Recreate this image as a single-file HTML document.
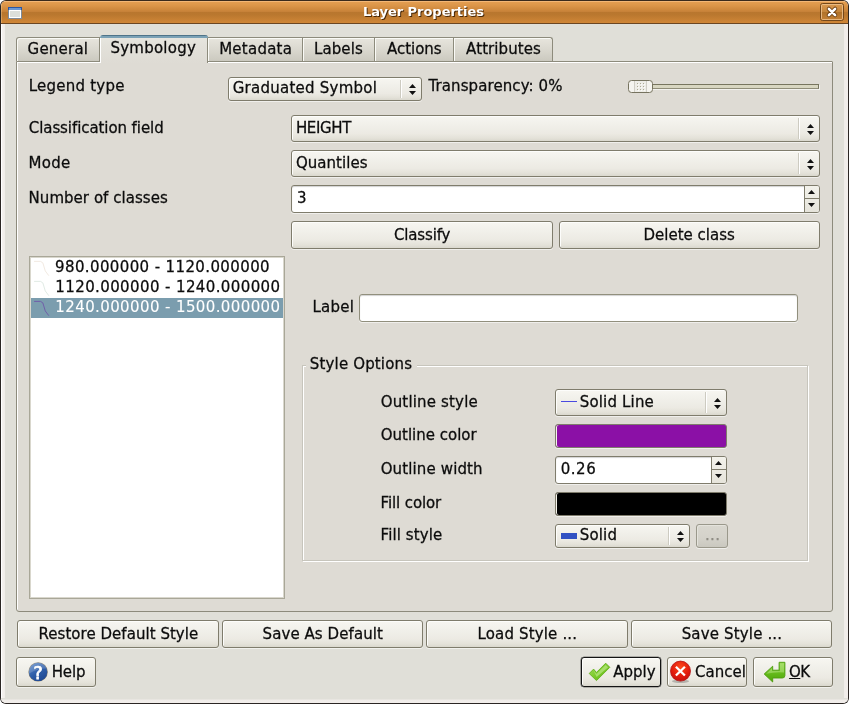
<!DOCTYPE html>
<html>
<head>
<meta charset="utf-8">
<title>Layer Properties</title>
<style>
html,body{margin:0;padding:0;background:#fff;}
body{width:849px;height:704px;overflow:hidden;position:relative;font-family:"DejaVu Sans","Liberation Sans",sans-serif;font-size:15px;color:#0c0c0c;}
#win{position:absolute;left:0;top:0;width:847px;height:702px;border:1px solid #2b2624;border-top-color:#3a2a1c;border-radius:6px 6px 6px 6px;background:#e0dfd8;overflow:hidden;will-change:transform;}
#win *{box-sizing:border-box;}
.abs{position:absolute;}
#title{position:absolute;left:0;top:0;width:847px;height:23px;background:linear-gradient(to bottom,#f3b776 0,#f3b776 1px,#e39d50 1px,#dd974a 4px,#cd873c 9px,#c58038 11px,#b8762e 11px,#ba782f 14px,#c88134 19px,#d08636 22px);border-bottom:1px solid #6b4622;box-shadow:inset 1px 0 0 rgba(255,220,170,.35);}
#title .txt{position:absolute;top:2px;white-space:nowrap;font-weight:bold;font-size:13px;color:#fff;text-shadow:1px 1px 0 rgba(50,25,0,.85);line-height:18px;}
.bevL{position:absolute;left:0;top:23px;width:5px;height:680px;background:linear-gradient(to right,#fff 0,#fff 1px,#f4f1ee 1.4px,#f1eeea 3.6px,#e0dfd8 4.4px);}
.bevR{position:absolute;left:842px;top:23px;width:5px;height:680px;background:linear-gradient(to left,#f2eeeb 0,#f0ece9 3.6px,#e0dfd8 4.4px);}
.bevB{position:absolute;left:0;top:697px;width:847px;height:5px;background:linear-gradient(to top,#f2eeeb 0,#f0ece9 3.1px,#e0dfd8 3.9px);}
#pane{position:absolute;left:15px;top:60px;width:817px;height:551px;border:1px solid #8d8b7c;border-radius:0 1px 3px 3px;background:#dedbd4;box-shadow:inset 1px 1px 0 #fff;}
.tab{position:absolute;top:36px;height:24px;border-top:1px solid #8d8b7c;border-right:1px solid #8d8b7c;background:linear-gradient(to bottom,#e7e5dd 0,#dad8cf 50%,#cbc9bf 100%);box-shadow:inset 1px 1px 0 #fafaf6;white-space:nowrap;}
.tab.first{border-left:1px solid #8d8b7c;border-top-left-radius:3px;}
.tab.last{border-top-right-radius:3px;}
.tab.sel{top:34px;height:28px;border:none;border-right:1px solid #8d8b7c;border-left:1px solid #fff;background:linear-gradient(to bottom,#e8e7e0 0,#e3e1da 40%,#dedbd4 100%);box-shadow:none;border-radius:3px 3px 0 0;}
.tab.sel:before{content:"";position:absolute;left:-1px;right:-1px;top:0;height:3px;background:linear-gradient(to bottom,#4f7489 0,#4f7489 1px,#7ba2b6 1px,#7ba2b6 3px);border-radius:3px 3px 0 0;}
.tx{position:absolute;white-space:nowrap;line-height:18px;height:18px;-webkit-text-stroke:0.27px currentColor;}
.btn,.combo{position:absolute;border:1px solid #7f7c6c;border-radius:3px;background:linear-gradient(to bottom,#f7f6f1 0,#f1f0ea 35%,#eceae3 70%,#e4e2d9 88%,#dad8ce 100%);box-shadow:inset 1px 1px 0 #fdfdfb,0 1px 0 rgba(255,255,255,.55);}
.combo .sep{position:absolute;right:19px;top:2px;bottom:2px;width:2px;background:linear-gradient(to right,#cdcbc1 0,#cdcbc1 1px,#fff 1px,#fff 2px);}
.combo svg.ar{position:absolute;right:5px;}
.btn.dis{border-color:#9a988b;background:linear-gradient(to bottom,#d9d7cf 0,#d4d2ca 60%,#cac8bf 100%);box-shadow:inset 1px 1px 0 #e4e3dc,0 1px 0 rgba(255,255,255,.55);}
.btn.def{border-color:#141414;box-shadow:inset 1px 1px 0 #fdfdfb,0 0 0 0.3px #141414;}
.edit{border-color:#918f7d !important;}
.edit,.spin{position:absolute;border:1px solid #7f7c6c;border-radius:3px;background:#fff;box-shadow:inset 0 1px 1px rgba(0,0,0,.18),0 1px 0 rgba(255,255,255,.55);}
.spin .bt{position:absolute;right:0;top:0;bottom:0;width:15px;border-left:1px solid #7f7c6c;background:linear-gradient(to bottom,#f3f2eb 0,#e6e4db 100%);border-radius:0 2px 2px 0;}
.spin .bt .mid{position:absolute;left:0;right:0;top:50%;margin-top:-1px;height:1px;background:#7f7c6c;}
.spin .bt svg{position:absolute;left:3px;}
</style>
</head>
<body>
<div id="win">
 <div id="title"><div class="txt" style="left:361.88px;letter-spacing:-0.03px;">Layer Properties</div></div>
 <div class="bevL"></div><div class="bevR"></div><div class="bevB"></div>
 <div id="pane"></div>
 <div class="tab first" style="left:15px;width:84px;"></div>
 <div class="tab " style="left:207px;width:95px;"></div>
 <div class="tab " style="left:302px;width:72px;"></div>
 <div class="tab " style="left:374px;width:79px;"></div>
 <div class="tab last" style="left:453px;width:99px;"></div>
 <div class="tab sel" style="left:99px;width:108px;"></div>
 <div class="tx " style="left:26.6px;top:39px;letter-spacing:0.21px;">General</div>
 <div class="tx " style="left:109.46px;top:38px;letter-spacing:0.24px;">Symbology</div>
 <div class="tx " style="left:218.19px;top:39px;letter-spacing:0.24px;">Metadata</div>
 <div class="tx " style="left:313.09px;top:39px;letter-spacing:0.07px;">Labels</div>
 <div class="tx " style="left:386.0px;top:39px;letter-spacing:-0.02px;">Actions</div>
 <div class="tx " style="left:465.1px;top:39px;letter-spacing:0.08px;">Attributes</div>
 <div class="tx " style="left:27.79px;top:76px;letter-spacing:0.23px;">Legend type</div>
 <div class="combo" style="left:227px;top:76px;width:194px;height:24px;"><div class="sep"></div><svg class="ar" style="top:6px" width="7" height="11" viewBox="0 0 7 11"><path d="M3.5 0 L7 4 L0 4 Z M0 7 L7 7 L3.5 11 Z" fill="#111"/></svg></div>
 <div class="tx " style="left:231.7px;top:78px;letter-spacing:0.25px;">Graduated Symbol</div>
 <div class="tx " style="left:427.53px;top:76px;letter-spacing:0.09px;">Transparency: 0%</div>
 <div class="abs" style="left:636px;top:83px;width:182px;height:5px;border:1px solid #77755f;border-bottom-color:#8f8d78;background:#d8d6c1;box-shadow:1px 1px 0 rgba(255,255,255,.6);"></div>
 <svg class="abs" style="left:627px;top:79px;" width="25" height="13" viewBox="0 0 25 13"><rect x="0.5" y="0.5" width="24" height="12" rx="3" fill="#f5f4ef" stroke="#76735f"/><rect x="7" y="1" width="11" height="11" fill="#eeede7"/><rect x="6" y="1" width="1" height="11" fill="#d0cec5"/><rect x="18" y="1" width="1" height="11" fill="#d0cec5"/><rect x="9" y="3" width="1" height="1" fill="#aeac96"/><rect x="10" y="4" width="1" height="1" fill="#fff" fill-opacity=".8"/><rect x="9" y="6" width="1" height="1" fill="#aeac96"/><rect x="10" y="7" width="1" height="1" fill="#fff" fill-opacity=".8"/><rect x="9" y="9" width="1" height="1" fill="#aeac96"/><rect x="10" y="10" width="1" height="1" fill="#fff" fill-opacity=".8"/><rect x="12" y="3" width="1" height="1" fill="#aeac96"/><rect x="13" y="4" width="1" height="1" fill="#fff" fill-opacity=".8"/><rect x="12" y="6" width="1" height="1" fill="#aeac96"/><rect x="13" y="7" width="1" height="1" fill="#fff" fill-opacity=".8"/><rect x="12" y="9" width="1" height="1" fill="#aeac96"/><rect x="13" y="10" width="1" height="1" fill="#fff" fill-opacity=".8"/><rect x="15" y="3" width="1" height="1" fill="#aeac96"/><rect x="16" y="4" width="1" height="1" fill="#fff" fill-opacity=".8"/><rect x="15" y="6" width="1" height="1" fill="#aeac96"/><rect x="16" y="7" width="1" height="1" fill="#fff" fill-opacity=".8"/><rect x="15" y="9" width="1" height="1" fill="#aeac96"/><rect x="16" y="10" width="1" height="1" fill="#fff" fill-opacity=".8"/></svg>
 <div class="tx " style="left:27.8px;top:118px;letter-spacing:-0.08px;">Classification field</div>
 <div class="combo" style="left:290px;top:114px;width:529px;height:27px;"><div class="sep"></div><svg class="ar" style="top:8px" width="7" height="11" viewBox="0 0 7 11"><path d="M3.5 0 L7 4 L0 4 Z M0 7 L7 7 L3.5 11 Z" fill="#111"/></svg></div>
 <div class="tx " style="left:294.89px;top:118px;letter-spacing:-0.35px;">HEIGHT</div>
 <div class="tx " style="left:27.59px;top:153px;letter-spacing:0.28px;">Mode</div>
 <div class="combo" style="left:290px;top:149px;width:529px;height:27px;"><div class="sep"></div><svg class="ar" style="top:8px" width="7" height="11" viewBox="0 0 7 11"><path d="M3.5 0 L7 4 L0 4 Z M0 7 L7 7 L3.5 11 Z" fill="#111"/></svg></div>
 <div class="tx " style="left:294.9px;top:153px;letter-spacing:0.05px;">Quantiles</div>
 <div class="tx " style="left:27.59px;top:188px;letter-spacing:0.04px;">Number of classes</div>
 <div class="spin" style="left:290px;top:184px;width:529px;height:28px;"><div class="bt"><div class="mid"></div><svg width="7" height="4" viewBox="0 0 7 4" style="top:4px"><path d="M3.5 0 L7 4 L0 4 Z" fill="#111"/></svg><svg width="7" height="4" viewBox="0 0 7 4" style="top:17px"><path d="M0 0 L7 0 L3.5 4 Z" fill="#111"/></svg></div></div>
 <div class="tx " style="left:296.06px;top:188px;">3</div>
 <div class="btn" style="left:290px;top:220px;width:262px;height:28px;"></div>
 <div class="tx " style="left:392.9px;top:225px;letter-spacing:-0.14px;">Classify</div>
 <div class="btn" style="left:558px;top:220px;width:261px;height:28px;"></div>
 <div class="tx " style="left:642.39px;top:225px;letter-spacing:0.02px;">Delete class</div>
 <div class="abs" id="list" style="left:28px;top:255px;width:256px;height:343px;border:1px solid #a9a798;background:#fff;box-shadow:inset 0 0 0 1px #d9d7cd;"></div>
 <div class="abs" style="left:30px;top:297px;width:252px;height:20px;background:#7b9dae;"></div>
 <div class="tx " style="left:54.06px;top:257px;letter-spacing:0.38px;">980.000000 - 1120.000000</div>
 <div class="tx " style="left:54.36px;top:277px;letter-spacing:0.39px;">1120.000000 - 1240.000000</div>
 <div class="tx " style="left:54.36px;top:297px;letter-spacing:0.39px;color:#fff;-webkit-text-stroke-width:0.1px;">1240.000000 - 1500.000000</div>
 <div class="tx " style="left:311.39px;top:297px;letter-spacing:0.25px;">Label</div>
 <div class="edit" style="left:358px;top:293px;width:439px;height:28px;"></div>
 <div class="abs" style="left:302px;top:365px;width:506px;height:196px;border:1px solid #fff;"></div>
 <div class="abs" style="left:301px;top:364px;width:506px;height:196px;border:1px solid #c7c5bc;"></div>
 <div class="tx " style="left:304.86px;top:354px;letter-spacing:0.15px;background:#dedbd4;padding:0 5px 0 4px;">Style Options</div>
 <div class="tx " style="left:379.7px;top:392px;letter-spacing:0.17px;">Outline style</div>
 <div class="combo" style="left:554px;top:388px;width:172px;height:27px;"><div class="sep"></div><svg class="ar" style="top:8px" width="7" height="11" viewBox="0 0 7 11"><path d="M3.5 0 L7 4 L0 4 Z M0 7 L7 7 L3.5 11 Z" fill="#111"/></svg></div>
 <div class="tx " style="left:578.76px;top:392px;letter-spacing:0.16px;">Solid Line</div>
 <div class="tx " style="left:379.7px;top:425px;">Outline color</div>
 <div class="abs" style="left:554px;top:423px;width:172px;height:24px;border:1px solid #7f7c6c;border-radius:3px;background:#8b10a6;box-shadow:inset 1px 0 0 #f4f3ec,0 1px 0 rgba(255,255,255,.55);"></div>
 <div class="tx " style="left:379.7px;top:459px;letter-spacing:0.13px;">Outline width</div>
 <div class="spin" style="left:554px;top:455px;width:172px;height:28px;"><div class="bt"><div class="mid"></div><svg width="7" height="4" viewBox="0 0 7 4" style="top:4px"><path d="M3.5 0 L7 4 L0 4 Z" fill="#111"/></svg><svg width="7" height="4" viewBox="0 0 7 4" style="top:17px"><path d="M0 0 L7 0 L3.5 4 Z" fill="#111"/></svg></div></div>
 <div class="tx " style="left:559.66px;top:459px;letter-spacing:0.54px;">0.26</div>
 <div class="tx " style="left:379.59px;top:493px;letter-spacing:-0.12px;">Fill color</div>
 <div class="abs" style="left:554px;top:491px;width:172px;height:24px;border:1px solid #7f7c6c;border-radius:3px;background:#000;box-shadow:inset 1px 0 0 #f4f3ec,0 1px 0 rgba(255,255,255,.55);"></div>
 <div class="tx " style="left:379.59px;top:525px;letter-spacing:0.09px;">Fill style</div>
 <div class="combo" style="left:554px;top:523px;width:135px;height:24px;"><div class="sep"></div><svg class="ar" style="top:6px" width="7" height="11" viewBox="0 0 7 11"><path d="M3.5 0 L7 4 L0 4 Z M0 7 L7 7 L3.5 11 Z" fill="#111"/></svg></div>
 <div class="tx " style="left:578.76px;top:525px;letter-spacing:0.15px;">Solid</div>
 <div class="btn dis" style="left:695px;top:523px;width:32px;height:24px;"></div>
 <div class="tx" style="left:704px;top:525px;color:#8f8d84;letter-spacing:0.35px;">...</div>
 <div class="btn" style="left:16px;top:619px;width:202px;height:28px;"></div>
 <div class="tx " style="left:37.49px;top:624px;letter-spacing:0.04px;">Restore Default Style</div>
 <div class="btn" style="left:221px;top:619px;width:201px;height:28px;"></div>
 <div class="tx " style="left:261.56px;top:624px;letter-spacing:0.08px;">Save As Default</div>
 <div class="btn" style="left:425px;top:619px;width:202px;height:28px;"></div>
 <div class="tx " style="left:476.49px;top:624px;letter-spacing:0.16px;">Load Style ...</div>
 <div class="btn" style="left:630px;top:619px;width:201px;height:28px;"></div>
 <div class="tx " style="left:680.66px;top:624px;letter-spacing:0.16px;">Save Style ...</div>
 <div class="btn" style="left:15px;top:656px;width:80px;height:30px;"></div>
 <div class="tx " style="left:50.69px;top:662px;letter-spacing:-0.16px;">Help</div>
 <div class="btn def" style="left:580px;top:656px;width:80px;height:30px;"></div>
 <div class="tx " style="left:612.3px;top:662px;letter-spacing:-0.03px;">Apply</div>
 <div class="btn" style="left:666px;top:656px;width:80px;height:30px;"></div>
 <div class="tx " style="left:694.1px;top:662px;">Cancel</div>
 <div class="btn" style="left:752px;top:656px;width:80px;height:30px;"></div>
 <div class="tx " style="left:788.1px;top:662px;letter-spacing:-0.6px;"><u>O</u>K</div>
 <svg class="abs" style="left:7px;top:6px;" width="14" height="12" viewBox="0 0 14 12"><rect x="0" y="0" width="14" height="12" fill="#7f8b99"/><rect x="0" y="0" width="14" height="3" fill="#2a55a2"/><rect x="1" y="1" width="12" height="2" fill="#6b97d2"/><rect x="1" y="3" width="12" height="8" fill="#fff"/><rect x="2" y="4" width="10" height="6" fill="#dcdfda"/></svg>
 <svg class="abs" style="left:819px;top:2px;" width="24" height="18" viewBox="0 0 24 18"><defs><linearGradient id="cg" x1="0" y1="0" x2="0" y2="1"><stop offset="0" stop-color="#dc9a50"/><stop offset="0.5" stop-color="#c4853b"/><stop offset="0.52" stop-color="#b0722a"/><stop offset="1" stop-color="#c68236"/></linearGradient></defs><rect x="0.5" y="0.5" width="23" height="17" rx="2" fill="url(#cg)" stroke="#74481a"/><rect x="1.5" y="1.5" width="21" height="15" rx="1.2" fill="none" stroke="#ecc08c" stroke-opacity=".85"/><path d="M8.9 5.9 L15.1 12.1 M15.1 5.9 L8.9 12.1" stroke="#6a3c10" stroke-width="4.3" stroke-linecap="round"/><path d="M8.9 5.9 L15.1 12.1 M15.1 5.9 L8.9 12.1" stroke="#fff" stroke-width="2.6" stroke-linecap="round"/></svg>
 <svg class="abs" style="left:26px;top:660px;will-change:transform;" width="22" height="23" viewBox="0 0 22 23"><defs><linearGradient id="hg" x1="0.2" y1="0" x2="0.8" y2="1"><stop offset="0" stop-color="#5b88c8"/><stop offset="0.5" stop-color="#2f5ea8"/><stop offset="1" stop-color="#1d4690"/></linearGradient></defs><circle cx="11.1" cy="10.9" r="9.65" fill="#5f5440" fill-opacity=".75"/><circle cx="11.1" cy="10.9" r="9.2" fill="url(#hg)"/><path d="M2.2 12.6 A9 9 0 0 1 19.6 7.6 Q10.5 7.6 2.2 12.6Z" fill="#fff" fill-opacity=".16"/><text x="11.2" y="17.9" text-anchor="middle" font-family="DejaVu Sans,Liberation Sans,sans-serif" font-size="17.3" fill="#fff" stroke="#fff" stroke-width="0.75">?</text></svg>
 <svg class="abs" style="left:585px;top:659px;" width="26" height="24" viewBox="0 0 26 24"><defs><linearGradient id="kg" x1="0" y1="0" x2="1" y2="1"><stop offset="0" stop-color="#a6e060"/><stop offset="0.55" stop-color="#78c828"/><stop offset="1" stop-color="#5fb414"/></linearGradient></defs><path d="M3.2 13.5 L7.6 9.1 L10.4 12.5 L19.7 3.2 L23.8 7.3 L10.5 20.6 Z" fill="url(#kg)" stroke="#63b01c" stroke-width="0.9" stroke-linejoin="round"/><path d="M7.6 10.6 L10.4 14 L19.7 4.9 L22.2 7.3 L10.6 17 Z" fill="#d4f4a8" fill-opacity=".5"/></svg>
 <svg class="abs" style="left:667px;top:658px;" width="25" height="26" viewBox="0 0 25 26"><defs><radialGradient id="rg" cx="0.5" cy="0.3" r="0.75"><stop offset="0" stop-color="#fb4a1c"/><stop offset="0.6" stop-color="#e21a0c"/><stop offset="1" stop-color="#c01010"/></radialGradient></defs><ellipse cx="12.5" cy="22.3" rx="8.5" ry="1.8" fill="#555" fill-opacity=".35"/><circle cx="12.5" cy="12.1" r="10" fill="url(#rg)" stroke="#b41212" stroke-width="0.8"/><path d="M7.9 7.7 L16.9 16.5 M16.9 7.7 L7.9 16.5" stroke="#fff" stroke-width="2.3"/></svg>
 <svg class="abs" style="left:761px;top:659px;" width="26" height="24" viewBox="0 0 26 24"><defs><linearGradient id="og" x1="0" y1="0" x2="0" y2="1"><stop offset="0" stop-color="#8ed44a"/><stop offset="0.6" stop-color="#62b818"/><stop offset="1" stop-color="#4fa40c"/></linearGradient></defs><path d="M2.2 14 L10.7 6.2 L10.7 10.2 L17.1 10.2 L17.1 2.3 L22.9 2.3 L22.9 15.6 Q22.9 18 20.4 18 L10.7 18 L10.7 22 Z" fill="url(#og)" stroke="#4c9c0c" stroke-width="0.9" stroke-linejoin="round"/><path d="M4.2 13.8 L10 8.4 L10 11 L18 11 L18 3.2 L22 3.2 L22 12.5 Q14 11.5 4.2 13.8Z" fill="#d0f2a0" fill-opacity=".4"/></svg>
 <div class="abs" style="left:560px;top:400px;width:16px;height:1px;background:#4a4ae0;"></div>
 <div class="abs" style="left:560px;top:532px;width:16px;height:6px;background:#3151c3;"></div>
 <svg class="abs" style="left:33px;top:259px;" width="16" height="17" viewBox="0 0 16 17"><path d="M0.1 1.4 L6.5 1.4 Q9.5 2 9.8 6 Q10.2 11 14.8 15.7" fill="none" stroke="#efe6de" stroke-width="0.9"/></svg>
 <svg class="abs" style="left:33px;top:279px;" width="16" height="17" viewBox="0 0 16 17"><path d="M0.1 1.4 L6.5 1.4 Q9.5 2 9.8 6 Q10.2 11 14.8 15.7" fill="none" stroke="#dde8e1" stroke-width="0.9"/></svg>
 <svg class="abs" style="left:33px;top:299px;" width="16" height="17" viewBox="0 0 16 17"><path d="M0.1 1.4 L6.5 1.4 Q9.5 2 9.8 6 Q10.2 11 14.8 15.7" fill="none" stroke="#6f57a8" stroke-width="0.9"/></svg>
</div>
</body>
</html>
